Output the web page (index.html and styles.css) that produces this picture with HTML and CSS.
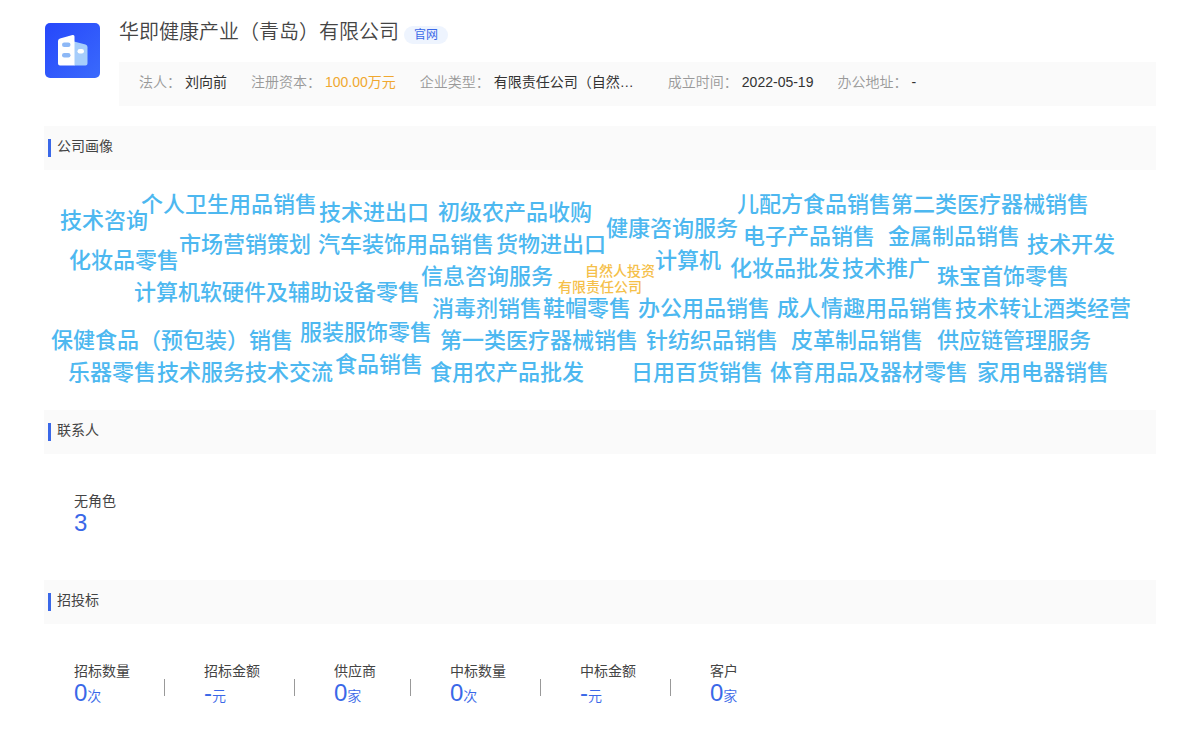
FILE: index.html
```html
<!DOCTYPE html>
<html lang="zh-CN">
<head>
<meta charset="utf-8">
<meta name="viewport" content="width=device-width, initial-scale=1">
<title>华即健康产业（青岛）有限公司</title>
<link rel="stylesheet" href="styles.css">
</head>
<body>
<main class="page">
  <header class="company">
    <svg class="logo" viewBox="0 0 55 55" aria-hidden="true">
      <defs>
        <linearGradient id="logo-bg" x1="0" y1="0" x2="1" y2="1">
          <stop offset="0" stop-color="#2647fb"/>
          <stop offset="1" stop-color="#3a6afc"/>
        </linearGradient>
      </defs>
      <rect width="55" height="55" rx="5" fill="url(#logo-bg)"/>
      <path d="M29 18.500 40.500 21.500Q42.500 22 42.500 24V40.500Q42.500 42.500 40.500 42.500H29Z" fill="#a6cdfb"/>
      <path d="M15 15.500 27.500 12Q29.500 11.500 29.500 13.500V42.500H15Q13 42.500 13 40.500V18Q13 16 15 15.500Z" fill="#fff"/>
      <rect x="17" y="19.500" width="8.500" height="4.500" rx="2.200" fill="#8db8f6"/>
      <rect x="17" y="30" width="8.500" height="4.500" rx="2.200" fill="#8db8f6"/>
      <rect x="32.500" y="26" width="6.500" height="4.500" rx="2.200" fill="#fff"/>
    </svg>
    <div class="company-main">
      <div class="title-row">
        <h1 class="company-name">华即健康产业（青岛）有限公司</h1>
        <a class="site-link" href="#">官网</a>
      </div>
      <dl class="facts">
        <div class="fact"><dt>法人：</dt><dd>刘向前</dd></div>
        <div class="fact"><dt>注册资本：</dt><dd class="money">100.00万元</dd></div>
        <div class="fact"><dt>企业类型：</dt><dd class="kind">有限责任公司（自然…</dd></div>
        <div class="fact"><dt>成立时间：</dt><dd>2022-05-19</dd></div>
        <div class="fact"><dt>办公地址：</dt><dd>-</dd></div>
      </dl>
    </div>
  </header>

  <section>
    <h2 class="section-title">公司画像</h2>
    <div class="cloud">
      <span class="word" style="left:16px;top:40px">技术咨询</span>
      <span class="word" style="left:97px;top:24px">个人卫生用品销售</span>
      <span class="word" style="left:275px;top:32px">技术进出口</span>
      <span class="word" style="left:394px;top:32px">初级农产品收购</span>
      <span class="word" style="left:693px;top:24px">儿配方食品销售</span>
      <span class="word" style="left:847px;top:24px">第二类医疗器械销售</span>
      <span class="word" style="left:562px;top:48px">健康咨询服务</span>
      <span class="word" style="left:699px;top:56px">电子产品销售</span>
      <span class="word" style="left:844px;top:56px">金属制品销售</span>
      <span class="word" style="left:983px;top:64px">技术开发</span>
      <span class="word" style="left:135px;top:64px">市场营销策划</span>
      <span class="word" style="left:274px;top:64px">汽车装饰用品销售</span>
      <span class="word" style="left:452px;top:64px">货物进出口</span>
      <span class="word" style="left:25px;top:80px">化妆品零售</span>
      <span class="word" style="left:377px;top:96px">信息咨询服务</span>
      <span class="word word-type" style="left:541px;top:90px">自然人投资</span>
      <span class="word word-type" style="left:514px;top:106px">有限责任公司</span>
      <span class="word" style="left:611px;top:80px">计算机</span>
      <span class="word" style="left:686px;top:88px">化妆品批发</span>
      <span class="word" style="left:798px;top:88px">技术推广</span>
      <span class="word" style="left:893px;top:96px">珠宝首饰零售</span>
      <span class="word" style="left:90px;top:112px">计算机软硬件及辅助设备零售</span>
      <span class="word" style="left:388px;top:128px">消毒剂销售</span>
      <span class="word" style="left:499px;top:128px">鞋帽零售</span>
      <span class="word" style="left:594px;top:128px">办公用品销售</span>
      <span class="word" style="left:733px;top:128px">成人情趣用品销售</span>
      <span class="word" style="left:911px;top:128px">技术转让</span>
      <span class="word" style="left:999px;top:128px">酒类经营</span>
      <span class="word" style="left:7px;top:160px">保健食品（预包装）销售</span>
      <span class="word" style="left:256px;top:152px">服装服饰零售</span>
      <span class="word" style="left:396px;top:160px">第一类医疗器械销售</span>
      <span class="word" style="left:602px;top:160px">针纺织品销售</span>
      <span class="word" style="left:747px;top:160px">皮革制品销售</span>
      <span class="word" style="left:893px;top:160px">供应链管理服务</span>
      <span class="word" style="left:24px;top:192px">乐器零售</span>
      <span class="word" style="left:113px;top:192px">技术服务</span>
      <span class="word" style="left:201px;top:192px">技术交流</span>
      <span class="word" style="left:291px;top:184px">食品销售</span>
      <span class="word" style="left:386px;top:192px">食用农产品批发</span>
      <span class="word" style="left:587px;top:192px">日用百货销售</span>
      <span class="word" style="left:726px;top:192px">体育用品及器材零售</span>
      <span class="word" style="left:933px;top:192px">家用电器销售</span>
    </div>
  </section>

  <section>
    <h2 class="section-title">联系人</h2>
    <dl class="stats">
      <div class="stat"><dt>无角色</dt><dd>3</dd></div>
    </dl>
  </section>

  <section>
    <h2 class="section-title">招投标</h2>
    <dl class="stats">
      <div class="stat"><dt>招标数量</dt><dd>0<small>次</small></dd></div>
      <div class="stat"><dt>招标金额</dt><dd>-<small>元</small></dd></div>
      <div class="stat"><dt>供应商</dt><dd>0<small>家</small></dd></div>
      <div class="stat"><dt>中标数量</dt><dd>0<small>次</small></dd></div>
      <div class="stat"><dt>中标金额</dt><dd>-<small>元</small></dd></div>
      <div class="stat"><dt>客户</dt><dd>0<small>家</small></dd></div>
    </dl>
  </section>
</main>
</body>
</html>
```

FILE: styles.css
```css
* {
  box-sizing: border-box;
}

body,
h1,
h2,
dl,
dd {
  margin: 0;
}

body {
  background: #fff;
  color: #444;
  font: 350 14px/20px "Liberation Sans", "Noto Sans CJK SC", sans-serif;
}

.page {
  padding: 20px 44px 0;
}

.company {
  display: flex;
  gap: 19px;
  padding-left: 1px;
  margin-bottom: 20px;
}

.logo {
  flex: none;
  width: 55px;
  height: 55px;
  margin-top: 3px;
}

.company-main {
  flex: 1;
  min-width: 0;
}

.title-row {
  display: flex;
  align-items: flex-start;
  gap: 5px;
  height: 42px;
}

.company-name {
  font-size: 20px;
  font-weight: 350;
  line-height: 24px;
}

.site-link {
  margin-top: 6px;
  padding: 0 10px;
  border-radius: 9px;
  background: #eef4fe;
  color: #3a68e8;
  font-size: 12px;
  font-weight: 400;
  line-height: 18px;
  text-decoration: none;
}

.facts {
  display: flex;
  flex-wrap: wrap;
  gap: 24px;
  padding: 10px 20px 14px;
  background: #fafafa;
}

.fact {
  display: flex;
  gap: 4px;
  white-space: nowrap;
}

.fact dt {
  color: #999;
}

.fact dd {
  color: #333;
  font-weight: 400;
}

.fact .money {
  color: #f0a830;
}

.fact .kind {
  width: 150px;
}

.section-title {
  display: flex;
  gap: 6px;
  height: 44px;
  padding: 10px 4px;
  background: #fafafa;
  font-size: 14px;
  font-weight: 400;
  line-height: 20px;
}

.section-title::before {
  content: "";
  width: 3px;
  height: 18px;
  margin-top: 3px;
  background: #3a68e8;
}

.cloud {
  position: relative;
  height: 240px;
}

.word {
  position: absolute;
  color: #4db8f0;
  font-size: 22px;
  font-weight: 500;
  line-height: 22px;
  white-space: nowrap;
}

.word-type {
  color: #f5c04a;
  font-size: 14px;
}

.stats {
  display: flex;
  min-height: 126px;
  padding: 37px 30px 0;
}

.stat {
  display: flex;
  flex-direction: column;
}

.stat + .stat {
  position: relative;
  margin-left: 34px;
  padding-left: 40px;
}

.stat + .stat::before {
  content: "";
  position: absolute;
  left: 0;
  top: 18px;
  width: 1px;
  height: 17px;
  background: #999;
}

.stat dt {
  font-weight: 400;
}

.stat dd {
  color: #3a68e8;
  font-size: 24px;
  line-height: 24px;
}

.stat small {
  font-size: 14px;
}
```
